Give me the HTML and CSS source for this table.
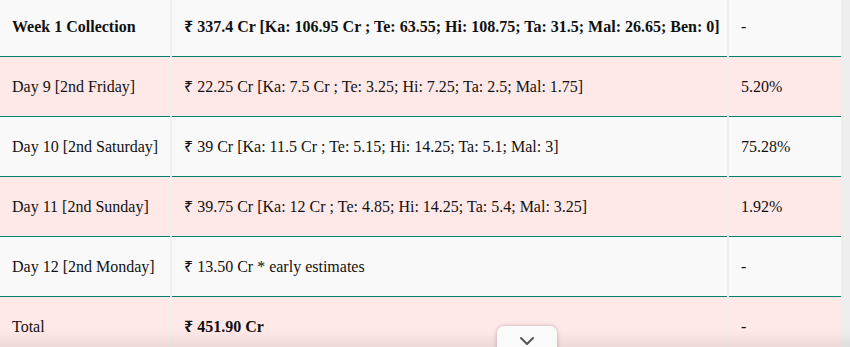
FILE: index.html
```html
<!DOCTYPE html>
<html>
<head>
<meta charset="utf-8">
<link rel="stylesheet" href="styles.css">
</head>
<body>
<div class="wrap">
<table class="box">
  <colgroup>
    <col class="c1"><col class="c2"><col class="c3">
  </colgroup>
  <tbody>
    <tr class="light bold">
      <td>Week 1 Collection</td>
      <td>₹ 337.4 Cr [Ka: 106.95 Cr ; Te: 63.55; Hi: 108.75; Ta: 31.5; Mal: 26.65; Ben: 0]</td>
      <td class="norm">-</td>
    </tr>
    <tr class="pink">
      <td>Day 9 [2nd Friday]</td>
      <td>₹ 22.25 Cr [Ka: 7.5 Cr ; Te: 3.25; Hi: 7.25; Ta: 2.5; Mal: 1.75]</td>
      <td>5.20%</td>
    </tr>
    <tr class="light">
      <td>Day 10 [2nd Saturday]</td>
      <td>₹ 39 Cr [Ka: 11.5 Cr ; Te: 5.15; Hi: 14.25; Ta: 5.1; Mal: 3]</td>
      <td>75.28%</td>
    </tr>
    <tr class="pink">
      <td>Day 11 [2nd Sunday]</td>
      <td>₹ 39.75 Cr [Ka: 12 Cr ; Te: 4.85; Hi: 14.25; Ta: 5.4; Mal: 3.25]</td>
      <td>1.92%</td>
    </tr>
    <tr class="light">
      <td>Day 12 [2nd Monday]</td>
      <td>₹ 13.50 Cr * early estimates</td>
      <td>-</td>
    </tr>
    <tr class="pink last">
      <td>Total</td>
      <td class="strong">₹ 451.90 Cr</td>
      <td>-</td>
    </tr>
  </tbody>
</table>
</div>
<div class="fade"></div>
<button class="more" aria-label="Scroll down">
  <svg width="16" height="10" viewBox="0 0 16 10"><path d="M2 2 L8 8 L14 2" fill="none" stroke="#555" stroke-width="2" stroke-linecap="round" stroke-linejoin="round"/></svg>
</button>
</body>
</html>
```
FILE: styles.css
```css
html, body {
  margin: 0;
  padding: 0;
  background: #eeeeee;
  overflow: hidden;
  height: 347px;
}
.wrap {
  margin-top: -3px;
  margin-left: -2px;
}
.box {
  border-collapse: separate;
  border-spacing: 2px 0;
  table-layout: fixed;
  width: 845px;
  font-family: "Liberation Serif", "Times New Roman", "Noto Sans", "DejaVu Serif", serif;
  font-size: 16px;
  color: #111;
}
.c1 { width: 170px; }
.c2 { width: 555px; }
.c3 { width: 112px; }
.box td {
  padding: 20px 12px 20px 12px;
  line-height: 19px;
  border-bottom: 1px solid #008267;
  white-space: nowrap;
  overflow: hidden;
  vertical-align: middle;
}
.box tr.last td { border-bottom: none; }
.light td { background: #f9f9f9; }
.pink td { background: #ffe8e8; }
.bold td { font-weight: bold; }
.bold td.norm { font-weight: normal; }
.strong { font-weight: bold; }
.fade {
  position: fixed;
  left: 0;
  right: 0;
  bottom: 0;
  height: 16px;
  background: linear-gradient(to bottom, rgba(0,0,0,0), rgba(0,0,0,0.07));
  pointer-events: none;
}
.more {
  position: fixed;
  left: 497px;
  top: 326px;
  width: 60px;
  height: 30px;
  border: none;
  border-radius: 7px;
  background: #fafafa;
  box-shadow: 0 0 4px rgba(0,0,0,0.25);
  padding: 0;
  display: flex;
  justify-content: center;
  align-items: flex-start;
  padding-top: 10px;
}
```
